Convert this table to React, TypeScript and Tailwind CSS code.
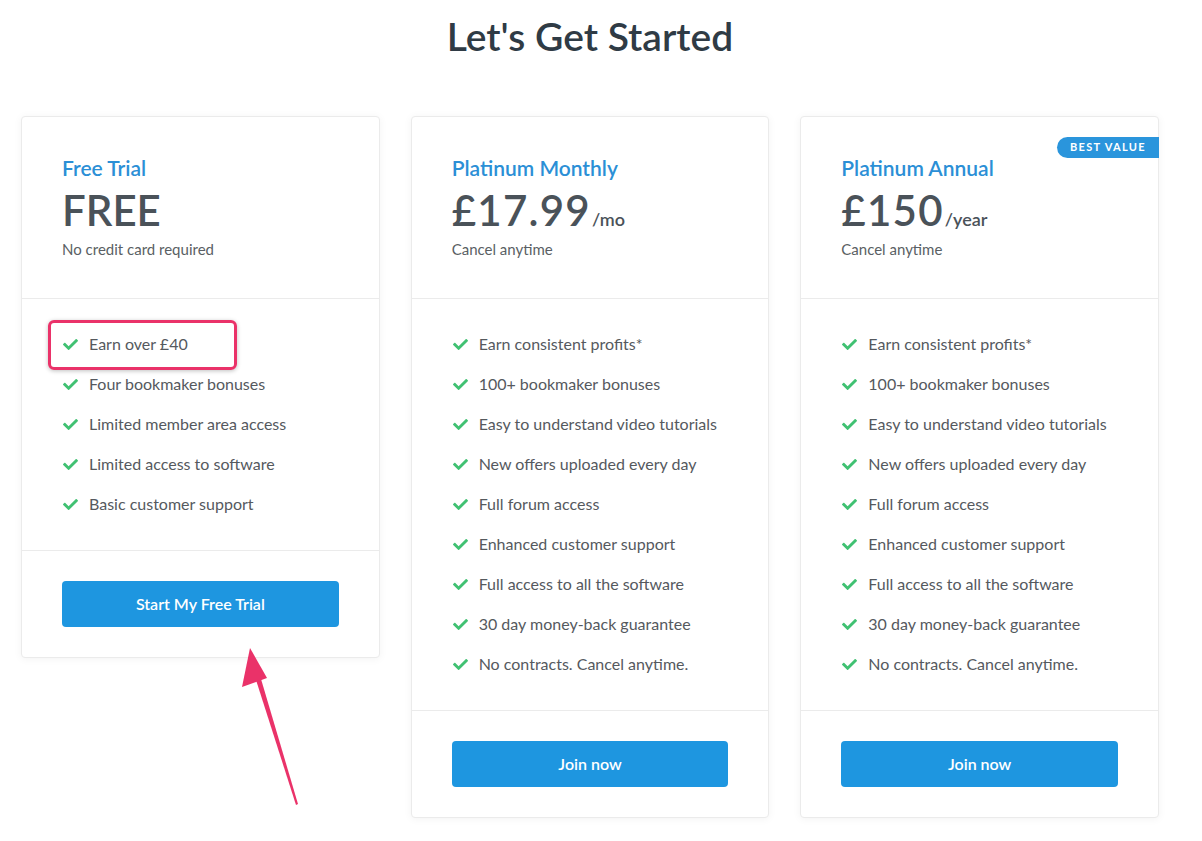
import React from 'react';
import { FaCheck } from 'react-icons/fa';

interface Plan {
  name: string;
  price: string;
  unit?: string;
  note: string;
  features: string[];
  cta: string;
  badge?: string;
}

const paidFeatures = [
  'Earn consistent profits*',
  '100+ bookmaker bonuses',
  'Easy to understand video tutorials',
  'New offers uploaded every day',
  'Full forum access',
  'Enhanced customer support',
  'Full access to all the software',
  '30 day money-back guarantee',
  'No contracts. Cancel anytime.',
];

const plans: Plan[] = [
  {
    name: 'Free Trial',
    price: 'FREE',
    note: 'No credit card required',
    features: [
      'Earn over £40',
      'Four bookmaker bonuses',
      'Limited member area access',
      'Limited access to software',
      'Basic customer support',
    ],
    cta: 'Start My Free Trial',
  },
  {
    name: 'Platinum Monthly',
    price: '£17.99',
    unit: '/mo',
    note: 'Cancel anytime',
    features: paidFeatures,
    cta: 'Join now',
  },
  {
    name: 'Platinum Annual',
    price: '£150',
    unit: '/year',
    note: 'Cancel anytime',
    features: paidFeatures,
    cta: 'Join now',
    badge: 'BEST VALUE',
  },
];

const PlanCard: React.FC<{ plan: Plan }> = ({ plan }) => (
  <div className="relative bg-white border border-[#ebebeb] rounded-[4px] shadow-[0_1px_8px_rgba(0,0,0,0.05)]">
    {plan.badge && (
      <span className="absolute top-[20px] right-[-1px] h-[21px] w-[102px] flex items-center justify-center rounded-l-full bg-[#2a95dc] text-white text-[11px] font-bold tracking-[0.12em]">
        {plan.badge}
      </span>
    )}
    <div className="px-10 pt-[39px] pb-[39px] border-b border-[#ebebeb]">
      <h3 className="text-[21px] leading-6 font-semibold text-[#2b8fd6]">{plan.name}</h3>
      <div className="mt-[8px] h-[44px] flex items-baseline text-[#4a5259]">
        <span className={plan.unit ? 'text-[42px] leading-[44px] font-semibold tracking-[0.03em]' : 'text-[42px] leading-[44px] font-semibold'}>
          {plan.price}
        </span>
        {plan.unit && <span className="text-[18px] leading-[20px] font-semibold ml-[1px]">{plan.unit}</span>}
      </div>
      <p className="mt-[7px] text-[15px] leading-5 text-[#5a5f64]">{plan.note}</p>
    </div>
    <ul className="px-10 pt-[33px] pb-[34px] flex flex-col gap-4">
      {plan.features.map((f) => (
        <li key={f} className="flex items-center h-6 text-[16px] text-[#55595e]">
          <FaCheck className="text-[#40c172] w-[15px] h-[15px] mr-[11px] ml-[1px]" />
          {f}
        </li>
      ))}
    </ul>
    <div className="px-10 pt-[30px] pb-[30px] border-t border-[#ebebeb]">
      <button className="w-full h-[46px] rounded-[4px] bg-[#1e96e0] text-white text-[16px] font-semibold">
        {plan.cta}
      </button>
    </div>
  </div>
);

export default function App() {
  return (
    <div className="relative w-[1180px] min-h-[841px] bg-white px-[21px] font-['Lato','Liberation_Sans',sans-serif]">
      <h1 className="pt-[12px] text-center text-[39px] leading-[48px] font-semibold text-[#2f3b45]">
        Let's Get Started
      </h1>
      <div className="mt-[56px] grid grid-cols-3 gap-[31px] items-start">
        {plans.map((p) => (
          <PlanCard key={p.name} plan={p} />
        ))}
      </div>

      {/* annotation: highlight box */}
      <div className="absolute left-[48px] top-[320px] w-[189px] h-[50px] border-[3px] border-[#ea3269] rounded-[6px] shadow-[0_1px_4px_rgba(0,0,0,0.25)]" />

      {/* annotation: arrow */}
      <svg className="absolute left-[230px] top-[640px]" width="80" height="180" viewBox="0 0 80 180">
        <path d="M66 165 L26 40 L31 39 L68 164 Z" fill="#ea3269" />
        <path d="M20 8 L12 47 L37 38 Z" fill="#ea3269" />
      </svg>
    </div>
  );
}
